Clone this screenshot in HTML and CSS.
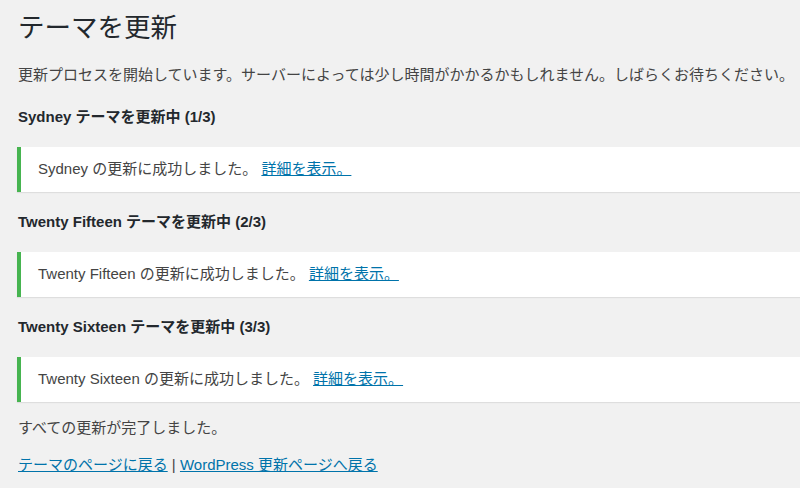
FILE: index.html
```html
<!DOCTYPE html>
<html lang="ja">
<head>
<meta charset="utf-8">
<title>テーマを更新</title>
<link rel="stylesheet" href="styles.css">
</head>
<body>
<div class="wrap">
  <h1 class="title">テーマを更新</h1>
  <p class="intro">更新プロセスを開始しています。サーバーによっては少し時間がかかるかもしれません。しばらくお待ちください。</p>

  <h2 class="step">Sydney テーマを更新中 (1/3)</h2>
  <div class="notice"><p>Sydney の更新に成功しました。 <a href="#">詳細を表示。</a></p></div>

  <h2 class="step">Twenty Fifteen テーマを更新中 (2/3)</h2>
  <div class="notice"><p>Twenty Fifteen の更新に成功しました。 <a href="#">詳細を表示。</a></p></div>

  <h2 class="step">Twenty Sixteen テーマを更新中 (3/3)</h2>
  <div class="notice"><p>Twenty Sixteen の更新に成功しました。 <a href="#">詳細を表示。</a></p></div>

  <p class="done">すべての更新が完了しました。</p>
  <p class="links"><a href="#">テーマのページに戻る</a> | <a href="#">WordPress 更新ページへ戻る</a></p>
</div>
</body>
</html>
```

FILE: styles.css
```css
html, body {
  margin: 0;
  padding: 0;
  background: #f1f1f1;
}

body {
  font-family: "Liberation Sans", "Noto Sans CJK JP", sans-serif;
  font-size: 15px;
  line-height: 22px;
  color: #444;
  overflow: hidden;
}

.wrap {
  padding: 11px 0 0 17px;
}

.title {
  margin: 0;
  font-size: 26.5px;
  line-height: 34px;
  font-weight: 400;
  color: #23282d;
  padding-left: 1px;
}

.intro {
  margin: 19px 0 0;
  padding-left: 1px;
  white-space: nowrap;
}

.step {
  margin: 20px 0 19px;
  font-size: 15px;
  line-height: 22px;
  font-weight: 700;
  color: #23282d;
  padding-left: 1px;
}

.notice {
  background: #fff;
  border-left: 4px solid #46b450;
  box-shadow: 0 1px 1px rgba(0, 0, 0, 0.08);
  padding: 11px 0 12px 17px;
}

.notice + .step {
  margin-top: 19px;
}

.notice p {
  margin: 0;
}

a {
  color: #0073aa;
  text-decoration: underline;
}

.done {
  margin: 15px 0 0;
  padding-left: 1px;
}

.links {
  margin: 15px 0 0;
  padding-left: 1px;
}
```
